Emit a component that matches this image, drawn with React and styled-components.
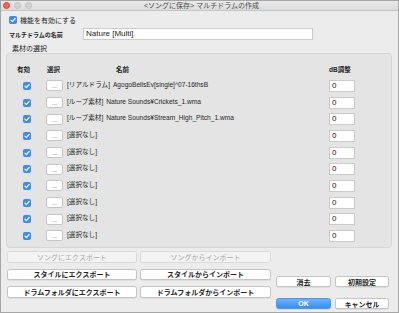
import React from "react";
import styled, { createGlobalStyle } from "styled-components";

const Global = createGlobalStyle`
  html, body { margin: 0; padding: 0; background: #ececec; }
  * { box-sizing: border-box; }
  body { font-family: "Liberation Sans", "Noto Sans CJK JP", sans-serif; color: #1e1e1e; }
`;

const Window = styled.div`
  width: 399px;
  height: 313px;
  border: 1px solid #a6a6a6;
  background: #ececec;
  display: flex;
  flex-direction: column;
  overflow: hidden;
`;

const TitleBar = styled.div`
  height: 10px;
  flex: none;
  background: linear-gradient(#e9e9e9, #dcdcdc);
  border-bottom: 1px solid #c4c4c4;
  position: relative;
  display: flex;
  align-items: center;
  justify-content: center;
`;

const Lights = styled.div`
  position: absolute;
  left: 2px;
  top: 1px;
  display: flex;
  gap: 4px;
`;

const Light = styled.span`
  width: 7px;
  height: 7px;
  border-radius: 50%;
  background: ${(p) => (p.$red ? "#f9605a" : "#d2d2d2")};
  border: 0.5px solid ${(p) => (p.$red ? "#e0443e" : "#c2c2c2")};
`;

const Title = styled.div`
  font-size: 7px;
  line-height: 9px;
  color: #4a4a4a;
  margin-left: 4px;
`;

const Content = styled.div`
  flex: 1;
  display: flex;
  flex-direction: column;
  padding: 0 6px 0 5px;
`;

const EnableRow = styled.div`
  margin-top: 4px;
  height: 10px;
  display: flex;
  align-items: center;
  gap: 3px;
  padding-left: 3px;
  font-size: 7px;
`;

const Box = styled.span`
  width: 8px;
  height: 8px;
  border-radius: 2px;
  background: #3c8bf3;
  display: inline-flex;
  align-items: center;
  justify-content: center;
  flex: none;
`;

const Check = () => (
  <Box>
    <svg width="8" height="8" viewBox="0 0 8 8">
      <path d="M2 4.2 L3.4 5.6 L6.1 2.5" fill="none" stroke="#fff" strokeWidth="1.2" strokeLinecap="round" strokeLinejoin="round" />
    </svg>
  </Box>
);

const NameRow = styled.div`
  margin-top: 3px;
  height: 12px;
  display: flex;
  align-items: center;
  padding-left: 3px;
`;

const NameLabel = styled.div`
  width: 74px;
  font-size: 6px;
  font-weight: bold;
`;

const TextField = styled.div`
  width: ${(p) => p.$w}px;
  height: 12px;
  background: #fff;
  border: 1px solid #cbcbcb;
  font-size: 8px;
  line-height: 10px;
  padding-left: 2px;
  color: #222;
`;

const SectionLabel = styled.div`
  margin-top: 5px;
  height: 8px;
  line-height: 8px;
  font-size: 7px;
  padding-left: 6px;
`;

const Group = styled.div`
  height: 195px;
  background: #e4e4e4;
  border: 1px solid #d6d6d6;
  border-radius: 4px;
  padding-top: 7px;
  display: grid;
  grid-template-columns: 39px 21px 262px 26px;
  grid-template-rows: repeat(11, 16.667px);
  align-items: center;
`;

const Head = styled.div`
  font-size: 6.5px;
  font-weight: bold;
  padding-left: ${(p) => p.$indent || 0}px;
`;

const CheckCell = styled.div`
  padding-left: 16px;
  display: flex;
`;

const PickButton = styled.div`
  width: 17px;
  height: 11px;
  background: #fff;
  border: 1px solid #c6c6c6;
  border-radius: 2px;
  font-size: 6px;
  line-height: 11px;
  text-align: center;
  color: #333;
`;

const NameCell = styled.div`
  align-self: start;
  padding-top: 1.5px;
  font-size: 6.6px;
  white-space: nowrap;
  color: #1e1e1e;
`;

const Tag = styled.span`
  margin-right: 3px;
`;

const Bottom = styled.div`
  display: flex;
  align-items: flex-start;
  margin-top: 3px;
`;

const LeftGrid = styled.div`
  margin-left: 1px;
  display: grid;
  grid-template-columns: 130px 131px;
  grid-auto-rows: 11.5px;
  column-gap: 3px;
  row-gap: 6px;
`;

const RightGrid = styled.div`
  margin-left: 5px;
  margin-top: 25px;
  display: grid;
  grid-template-columns: 55px 54px;
  grid-auto-rows: 11px;
  column-gap: 4px;
  row-gap: 11px;
`;

const Button = styled.div`
  height: 100%;
  border-radius: 2.5px;
  display: flex;
  align-items: center;
  justify-content: center;
  font-size: 7px;
  font-weight: bold;
  background: ${(p) =>
    p.$primary ? "linear-gradient(#6ab2fa, #3a8ef2)" : p.$disabled ? "#f3f3f3" : "#fff"};
  color: ${(p) => (p.$primary ? "#fff" : p.$disabled ? "#a9a9a9" : "#222")};
  border: 1px solid ${(p) => (p.$primary ? "#4a97f0" : p.$disabled ? "#dadada" : "#c4c4c4")};
  font-weight: ${(p) => (p.$disabled ? "normal" : "bold")};
  box-shadow: ${(p) => (p.$disabled ? "none" : "0 0.5px 0.5px rgba(0,0,0,0.12)")};
`;

const rows = [
  { tag: "[リアルドラム]", name: "AgogoBellsEv[single]^07-16thsB" },
  { tag: "[ループ素材]", name: "Nature Sounds¥Crickets_1.wma" },
  { tag: "[ループ素材]", name: "Nature Sounds¥Stream_High_Pitch_1.wma" },
  ...Array.from({ length: 7 }, () => ({ tag: "[選択なし]", name: "" })),
];

export default function App() {
  return (
    <>
      <Global />
      <Window>
        <TitleBar>
          <Lights>
            <Light $red />
            <Light />
            <Light />
          </Lights>
          <Title>&lt;ソングに保存&gt; マルチドラムの作成</Title>
        </TitleBar>
        <Content>
          <EnableRow>
            <Check />
            <span>機能を有効にする</span>
          </EnableRow>
          <NameRow>
            <NameLabel>マルチドラムの名前</NameLabel>
            <TextField $w={230}>Nature [Multi]</TextField>
          </NameRow>
          <SectionLabel>素材の選択</SectionLabel>
          <Group>
            <Head $indent={10}>有効</Head>
            <Head $indent={1}>選択</Head>
            <Head $indent={49}>名前</Head>
            <Head>dB調整</Head>
            {rows.map((r, i) => (
              <React.Fragment key={i}>
                <CheckCell>
                  <Check />
                </CheckCell>
                <PickButton>...</PickButton>
                <NameCell>
                  <Tag>{r.tag}</Tag>
                  {r.name}
                </NameCell>
                <TextField $w={26}>0</TextField>
              </React.Fragment>
            ))}
          </Group>
          <Bottom>
            <LeftGrid>
              <Button $disabled>ソングにエクスポート</Button>
              <Button $disabled>ソングからインポート</Button>
              <Button>スタイルにエクスポート</Button>
              <Button>スタイルからインポート</Button>
              <Button>ドラムフォルダにエクスポート</Button>
              <Button>ドラムフォルダからインポート</Button>
            </LeftGrid>
            <RightGrid>
              <Button>消去</Button>
              <Button>初期設定</Button>
              <Button $primary>OK</Button>
              <Button>キャンセル</Button>
            </RightGrid>
          </Bottom>
        </Content>
      </Window>
    </>
  );
}
